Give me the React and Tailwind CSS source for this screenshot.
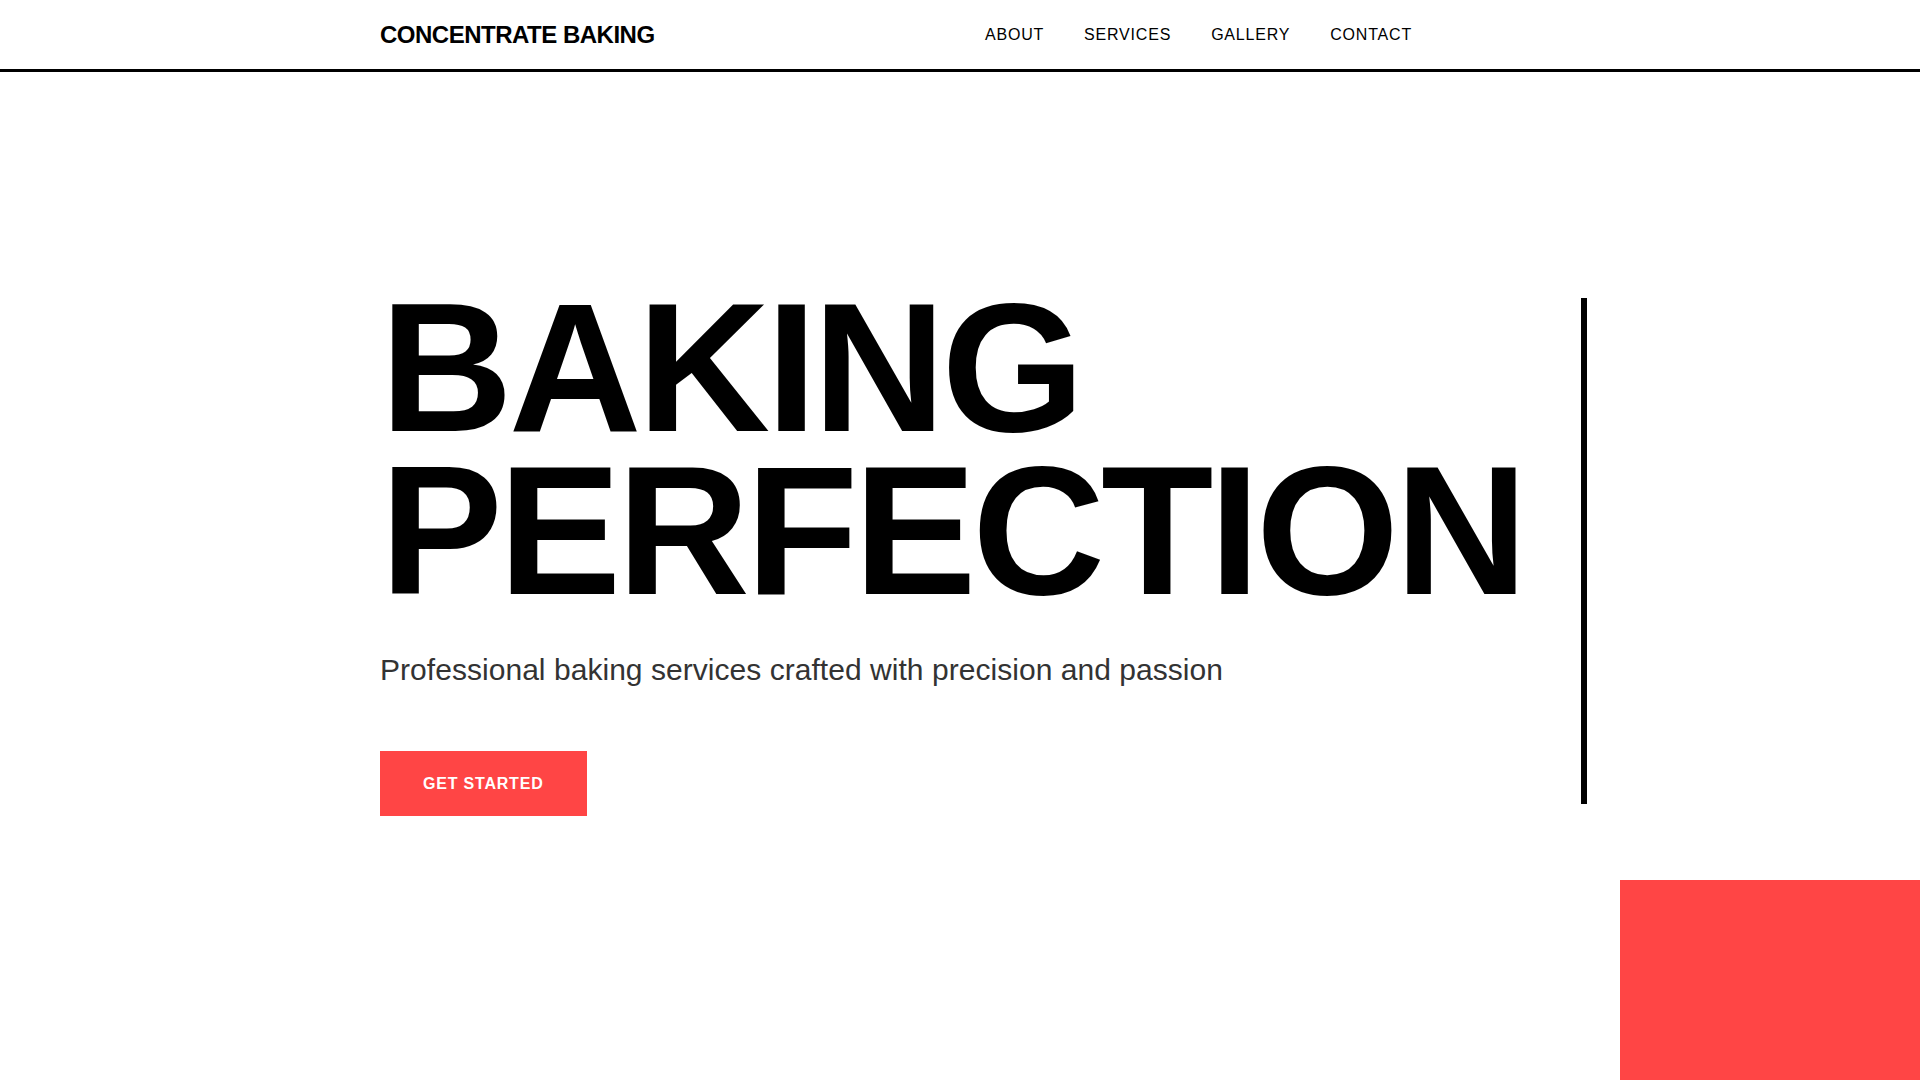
import React from 'react';

const navLinks = ['ABOUT', 'SERVICES', 'GALLERY', 'CONTACT'];

const App = () => {
    return (
        <div className="relative min-h-screen overflow-hidden bg-white text-black font-['Liberation_Sans',Arial,sans-serif]">
            {/* Header */}
            <header className="border-b-[3px] border-black">
                <div className="ml-[380px] w-[1032px] h-[69px] flex items-center justify-between">
                    <a href="#" className="text-[24px] font-bold tracking-[-0.5px] leading-none">CONCENTRATE BAKING</a>
                    <nav className="flex items-center gap-10">
                        {navLinks.map((link) => (
                            <a key={link} href="#" className="text-[16px] tracking-wider leading-none">{link}</a>
                        ))}
                    </nav>
                </div>
            </header>

            {/* Hero */}
            <section className="ml-[380px] w-[1207px] pt-[214px] flex items-center justify-between">
                <div>
                    <h1 className="text-[184px] font-bold leading-[163px] tracking-[-0.023em]">
                        BAKING<br />PERFECTION
                    </h1>
                    <p className="mt-[35px] text-[30px] leading-[45px] tracking-[0.04px] text-[#333333]">
                        Professional baking services crafted with precision and passion
                    </p>
                    <button className="mt-[59px] bg-[#ff4545] text-white text-[16px] font-bold tracking-wider leading-[25px] px-[43px] py-5">
                        GET STARTED
                    </button>
                </div>
                <div className="w-[6px] h-[506px] bg-black"></div>
            </section>

            {/* Decoration */}
            <div className="absolute right-0 bottom-0 w-[300px] h-[200px] bg-[#ff4545]"></div>
        </div>
    );
};

export default App;
